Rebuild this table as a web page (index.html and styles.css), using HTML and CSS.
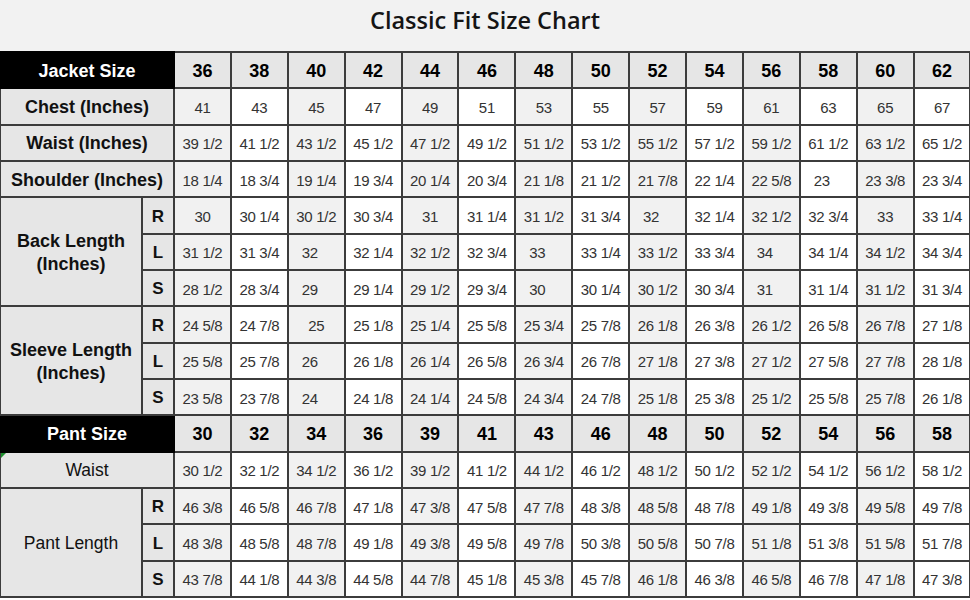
FILE: index.html
```html
<!DOCTYPE html>
<html>
<head>
<meta charset="utf-8">
<link rel="stylesheet" href="styles.css">
</head>
<body>
<div class="title-bar"><h1 class="title">Classic Fit Size Chart</h1></div>
<table class="chart">
<colgroup>
<col class="c-main"><col class="c-sub">
<col class="c-v"><col class="c-v"><col class="c-v"><col class="c-v"><col class="c-v"><col class="c-v"><col class="c-v">
<col class="c-v"><col class="c-v"><col class="c-v"><col class="c-v"><col class="c-v"><col class="c-v"><col class="c-v">
</colgroup>
<tbody>
<tr class="head"><th colspan="2" class="sec">Jacket Size</th><th>36</th><th>38</th><th>40</th><th>42</th><th>44</th><th>46</th><th>48</th><th>50</th><th>52</th><th>54</th><th>56</th><th>58</th><th>60</th><th>62</th></tr>
<tr><th colspan="2" class="lab">Chest (Inches)</th><td>41</td><td>43</td><td>45</td><td>47</td><td>49</td><td>51</td><td>53</td><td>55</td><td>57</td><td>59</td><td>61</td><td>63</td><td>65</td><td>67</td></tr>
<tr><th colspan="2" class="lab">Waist (Inches)</th><td>39 1/2</td><td>41 1/2</td><td>43 1/2</td><td>45 1/2</td><td>47 1/2</td><td>49 1/2</td><td>51 1/2</td><td>53 1/2</td><td>55 1/2</td><td>57 1/2</td><td>59 1/2</td><td>61 1/2</td><td>63 1/2</td><td>65 1/2</td></tr>
<tr><th colspan="2" class="lab">Shoulder (Inches)</th><td>18 1/4</td><td>18 3/4</td><td>19 1/4</td><td>19 3/4</td><td>20 1/4</td><td>20 3/4</td><td>21 1/8</td><td>21 1/2</td><td>21 7/8</td><td>22 1/4</td><td>22 5/8</td><td class="ls">23</td><td>23 3/8</td><td>23 3/4</td></tr>
<tr><th rowspan="3" class="lab">Back Length<br>(Inches)</th><th class="sub">R</th><td>30</td><td>30 1/4</td><td>30 1/2</td><td>30 3/4</td><td>31</td><td>31 1/4</td><td>31 1/2</td><td>31 3/4</td><td class="ls">32</td><td>32 1/4</td><td>32 1/2</td><td>32 3/4</td><td>33</td><td>33 1/4</td></tr>
<tr><th class="sub">L</th><td>31 1/2</td><td>31 3/4</td><td class="ls">32</td><td>32 1/4</td><td>32 1/2</td><td>32 3/4</td><td class="ls">33</td><td>33 1/4</td><td>33 1/2</td><td>33 3/4</td><td class="ls">34</td><td>34 1/4</td><td>34 1/2</td><td>34 3/4</td></tr>
<tr><th class="sub">S</th><td>28 1/2</td><td>28 3/4</td><td class="ls">29</td><td>29 1/4</td><td>29 1/2</td><td>29 3/4</td><td class="ls">30</td><td>30 1/4</td><td>30 1/2</td><td>30 3/4</td><td class="ls">31</td><td>31 1/4</td><td>31 1/2</td><td>31 3/4</td></tr>
<tr><th rowspan="3" class="lab">Sleeve Length<br>(Inches)</th><th class="sub">R</th><td>24 5/8</td><td>24 7/8</td><td>25</td><td>25 1/8</td><td>25 1/4</td><td>25 5/8</td><td>25 3/4</td><td>25 7/8</td><td>26 1/8</td><td>26 3/8</td><td>26 1/2</td><td>26 5/8</td><td>26 7/8</td><td>27 1/8</td></tr>
<tr><th class="sub">L</th><td>25 5/8</td><td>25 7/8</td><td class="ls">26</td><td>26 1/8</td><td>26 1/4</td><td>26 5/8</td><td>26 3/4</td><td>26 7/8</td><td>27 1/8</td><td>27 3/8</td><td>27 1/2</td><td>27 5/8</td><td>27 7/8</td><td>28 1/8</td></tr>
<tr><th class="sub">S</th><td>23 5/8</td><td>23 7/8</td><td class="ls">24</td><td>24 1/8</td><td>24 1/4</td><td>24 5/8</td><td>24 3/4</td><td>24 7/8</td><td>25 1/8</td><td>25 3/8</td><td>25 1/2</td><td>25 5/8</td><td>25 7/8</td><td>26 1/8</td></tr>
<tr class="head"><th colspan="2" class="sec">Pant Size</th><th>30</th><th>32</th><th>34</th><th>36</th><th>39</th><th>41</th><th>43</th><th>46</th><th>48</th><th>50</th><th>52</th><th>54</th><th>56</th><th>58</th></tr>
<tr><th colspan="2" class="lab plain flag">Waist</th><td>30 1/2</td><td>32 1/2</td><td>34 1/2</td><td>36 1/2</td><td>39 1/2</td><td>41 1/2</td><td>44 1/2</td><td>46 1/2</td><td>48 1/2</td><td>50 1/2</td><td>52 1/2</td><td>54 1/2</td><td>56 1/2</td><td>58 1/2</td></tr>
<tr><th rowspan="3" class="lab plain">Pant Length</th><th class="sub">R</th><td>46 3/8</td><td>46 5/8</td><td>46 7/8</td><td>47 1/8</td><td>47 3/8</td><td>47 5/8</td><td>47 7/8</td><td>48 3/8</td><td>48 5/8</td><td>48 7/8</td><td>49 1/8</td><td>49 3/8</td><td>49 5/8</td><td>49 7/8</td></tr>
<tr><th class="sub">L</th><td>48 3/8</td><td>48 5/8</td><td>48 7/8</td><td>49 1/8</td><td>49 3/8</td><td>49 5/8</td><td>49 7/8</td><td>50 3/8</td><td>50 5/8</td><td>50 7/8</td><td>51 1/8</td><td>51 3/8</td><td>51 5/8</td><td>51 7/8</td></tr>
<tr><th class="sub">S</th><td>43 7/8</td><td>44 1/8</td><td>44 3/8</td><td>44 5/8</td><td>44 7/8</td><td>45 1/8</td><td>45 3/8</td><td>45 7/8</td><td>46 1/8</td><td>46 3/8</td><td>46 5/8</td><td>46 7/8</td><td>47 1/8</td><td>47 3/8</td></tr>
</tbody>
</table>
</body>
</html>
```
FILE: styles.css
```css
html, body {
  margin: 0;
  padding: 0;
  background: #ffffff;
}
body {
  width: 970px;
  font-family: "Liberation Sans", Arial, sans-serif;
}
.title-bar {
  height: 51px;
  background: #f2f2f2;
  display: flex;
  align-items: center;
  justify-content: center;
}
.title {
  margin: 0;
  padding-bottom: 11px;
  font-family: "Open Sans", "Noto Sans", sans-serif;
  font-weight: 600;
  font-size: 23.5px;
  color: #151515;
}
.chart {
  width: 971px;
  table-layout: fixed;
  border-collapse: collapse;
  margin-left: -1px;
}
.c-main { width: 142px; }
.c-sub { width: 32px; }
.c-v { width: 56.9px; }
.chart tr { height: 36.35px; }
.chart th, .chart td {
  border: 2px solid #3c3c3c;
  padding: 2px 0 0 0;
  text-align: center;
  vertical-align: middle;
  white-space: nowrap;
}
.chart td {
  font-size: 15px;
  color: #333333;
  background: #ffffff;
  letter-spacing: -0.3px;
}
.chart td:nth-of-type(odd) { background: #f1f1f1; }
.chart td.ls { padding-right: 13px; }
.head th {
  background: #e6e6e6;
  font-size: 18px;
  font-weight: bold;
  color: #000;
}
.head th.sec {
  background: #000000;
  color: #ffffff;
  border-color: #000;
}
.lab {
  background: #e6e6e6;
  font-size: 18px;
  font-weight: bold;
  color: #111;
  line-height: 23px;
}
.lab.plain {
  font-weight: normal;
  font-size: 17.5px;
  color: #111;
}
.sub {
  background: #e6e6e6;
  font-size: 17px;
  font-weight: bold;
  color: #111;
}
.flag { position: relative; }
.flag::before {
  content: "";
  position: absolute;
  left: 0;
  top: 0;
  border-top: 5px solid #1e8f2e;
  border-right: 5px solid transparent;
}
```
